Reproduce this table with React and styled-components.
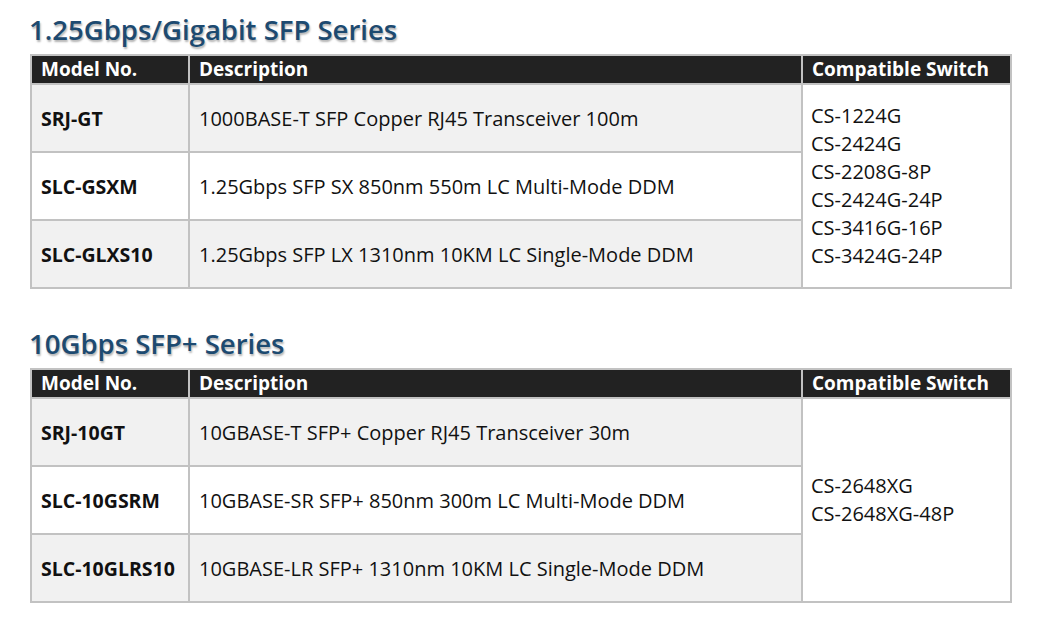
import React from 'react';
import styled, { createGlobalStyle } from 'styled-components';

const GlobalStyle = createGlobalStyle`
  body {
    margin: 0;
    background: #fff;
    font-family: "Open Sans", "Noto Sans", sans-serif;
    color: #111;
  }
`;

const Page = styled.div`
  width: 1045px;
  padding: 12px 0 0 30px;
  box-sizing: border-box;
`;

const Section = styled.section`
  margin-bottom: 37px;
`;

const Title = styled.h2`
  margin: 0 0 6px -1px;
  font-size: 27.5px;
  line-height: 36px;
  font-weight: 600;
  color: #1d4a70;
  text-shadow: 1px 2px 2px rgba(0, 0, 0, 0.3);
`;

const Table = styled.table`
  width: 980px;
  border-collapse: collapse;
  table-layout: fixed;
  border: 2px solid #c2c2c2;
  font-size: 20px;
`;

const HeadCell = styled.th`
  background: #222;
  color: #fff;
  font-weight: 700;
  font-size: 19px;
  text-align: left;
  height: 27px;
  padding: 0 0 0 9px;
  border: 2px solid #c2c2c2;
  line-height: 27px;
  white-space: nowrap;
`;

const Row = styled.tr`
  background: ${(p) => (p.$shaded ? '#f1f1f1' : '#fff')};
`;

const Cell = styled.td`
  height: 66px;
  padding: 0 0 0 ${(p) => (p.$bold ? 9 : 9)}px;
  border: 2px solid #c2c2c2;
  vertical-align: middle;
  font-weight: ${(p) => (p.$bold ? 700 : 400)};
  font-size: ${(p) => (p.$bold ? 19.5 : 20)}px;
  white-space: nowrap;
`;

const SwitchCell = styled.td`
  background: #fff;
  padding: 0 0 0 8px;
  border: 2px solid #c2c2c2;
  vertical-align: middle;
  line-height: 28px;
`;

const SwitchName = styled.div``;

const series = [
  {
    title: '1.25Gbps/Gigabit SFP Series',
    rows: [
      ['SRJ-GT', '1000BASE-T SFP Copper RJ45 Transceiver 100m'],
      ['SLC-GSXM', '1.25Gbps SFP SX 850nm 550m LC Multi-Mode DDM'],
      ['SLC-GLXS10', '1.25Gbps SFP LX 1310nm 10KM LC Single-Mode DDM'],
    ],
    switches: ['CS-1224G', 'CS-2424G', 'CS-2208G-8P', 'CS-2424G-24P', 'CS-3416G-16P', 'CS-3424G-24P'],
  },
  {
    title: '10Gbps SFP+ Series',
    rows: [
      ['SRJ-10GT', '10GBASE-T SFP+ Copper RJ45 Transceiver 30m'],
      ['SLC-10GSRM', '10GBASE-SR SFP+ 850nm 300m LC Multi-Mode DDM'],
      ['SLC-10GLRS10', '10GBASE-LR SFP+ 1310nm 10KM LC Single-Mode DDM'],
    ],
    switches: ['CS-2648XG', 'CS-2648XG-48P'],
  },
];

const App = () => {
  return (
    <Page>
      <GlobalStyle />
      {series.map((s) => (
        <Section key={s.title}>
          <Title>{s.title}</Title>
          <Table>
            <colgroup>
              <col style={{ width: 158 }} />
              <col style={{ width: 613 }} />
              <col style={{ width: 209 }} />
            </colgroup>
            <thead>
              <tr>
                <HeadCell>Model No.</HeadCell>
                <HeadCell>Description</HeadCell>
                <HeadCell>Compatible Switch</HeadCell>
              </tr>
            </thead>
            <tbody>
              {s.rows.map((r, i) => (
                <Row key={r[0]} $shaded={i % 2 === 0}>
                  <Cell $bold>{r[0]}</Cell>
                  <Cell>{r[1]}</Cell>
                  {i === 0 && (
                    <SwitchCell rowSpan={s.rows.length}>
                      {s.switches.map((sw) => (
                        <SwitchName key={sw}>{sw}</SwitchName>
                      ))}
                    </SwitchCell>
                  )}
                </Row>
              ))}
            </tbody>
          </Table>
        </Section>
      ))}
    </Page>
  );
};

export default App;
